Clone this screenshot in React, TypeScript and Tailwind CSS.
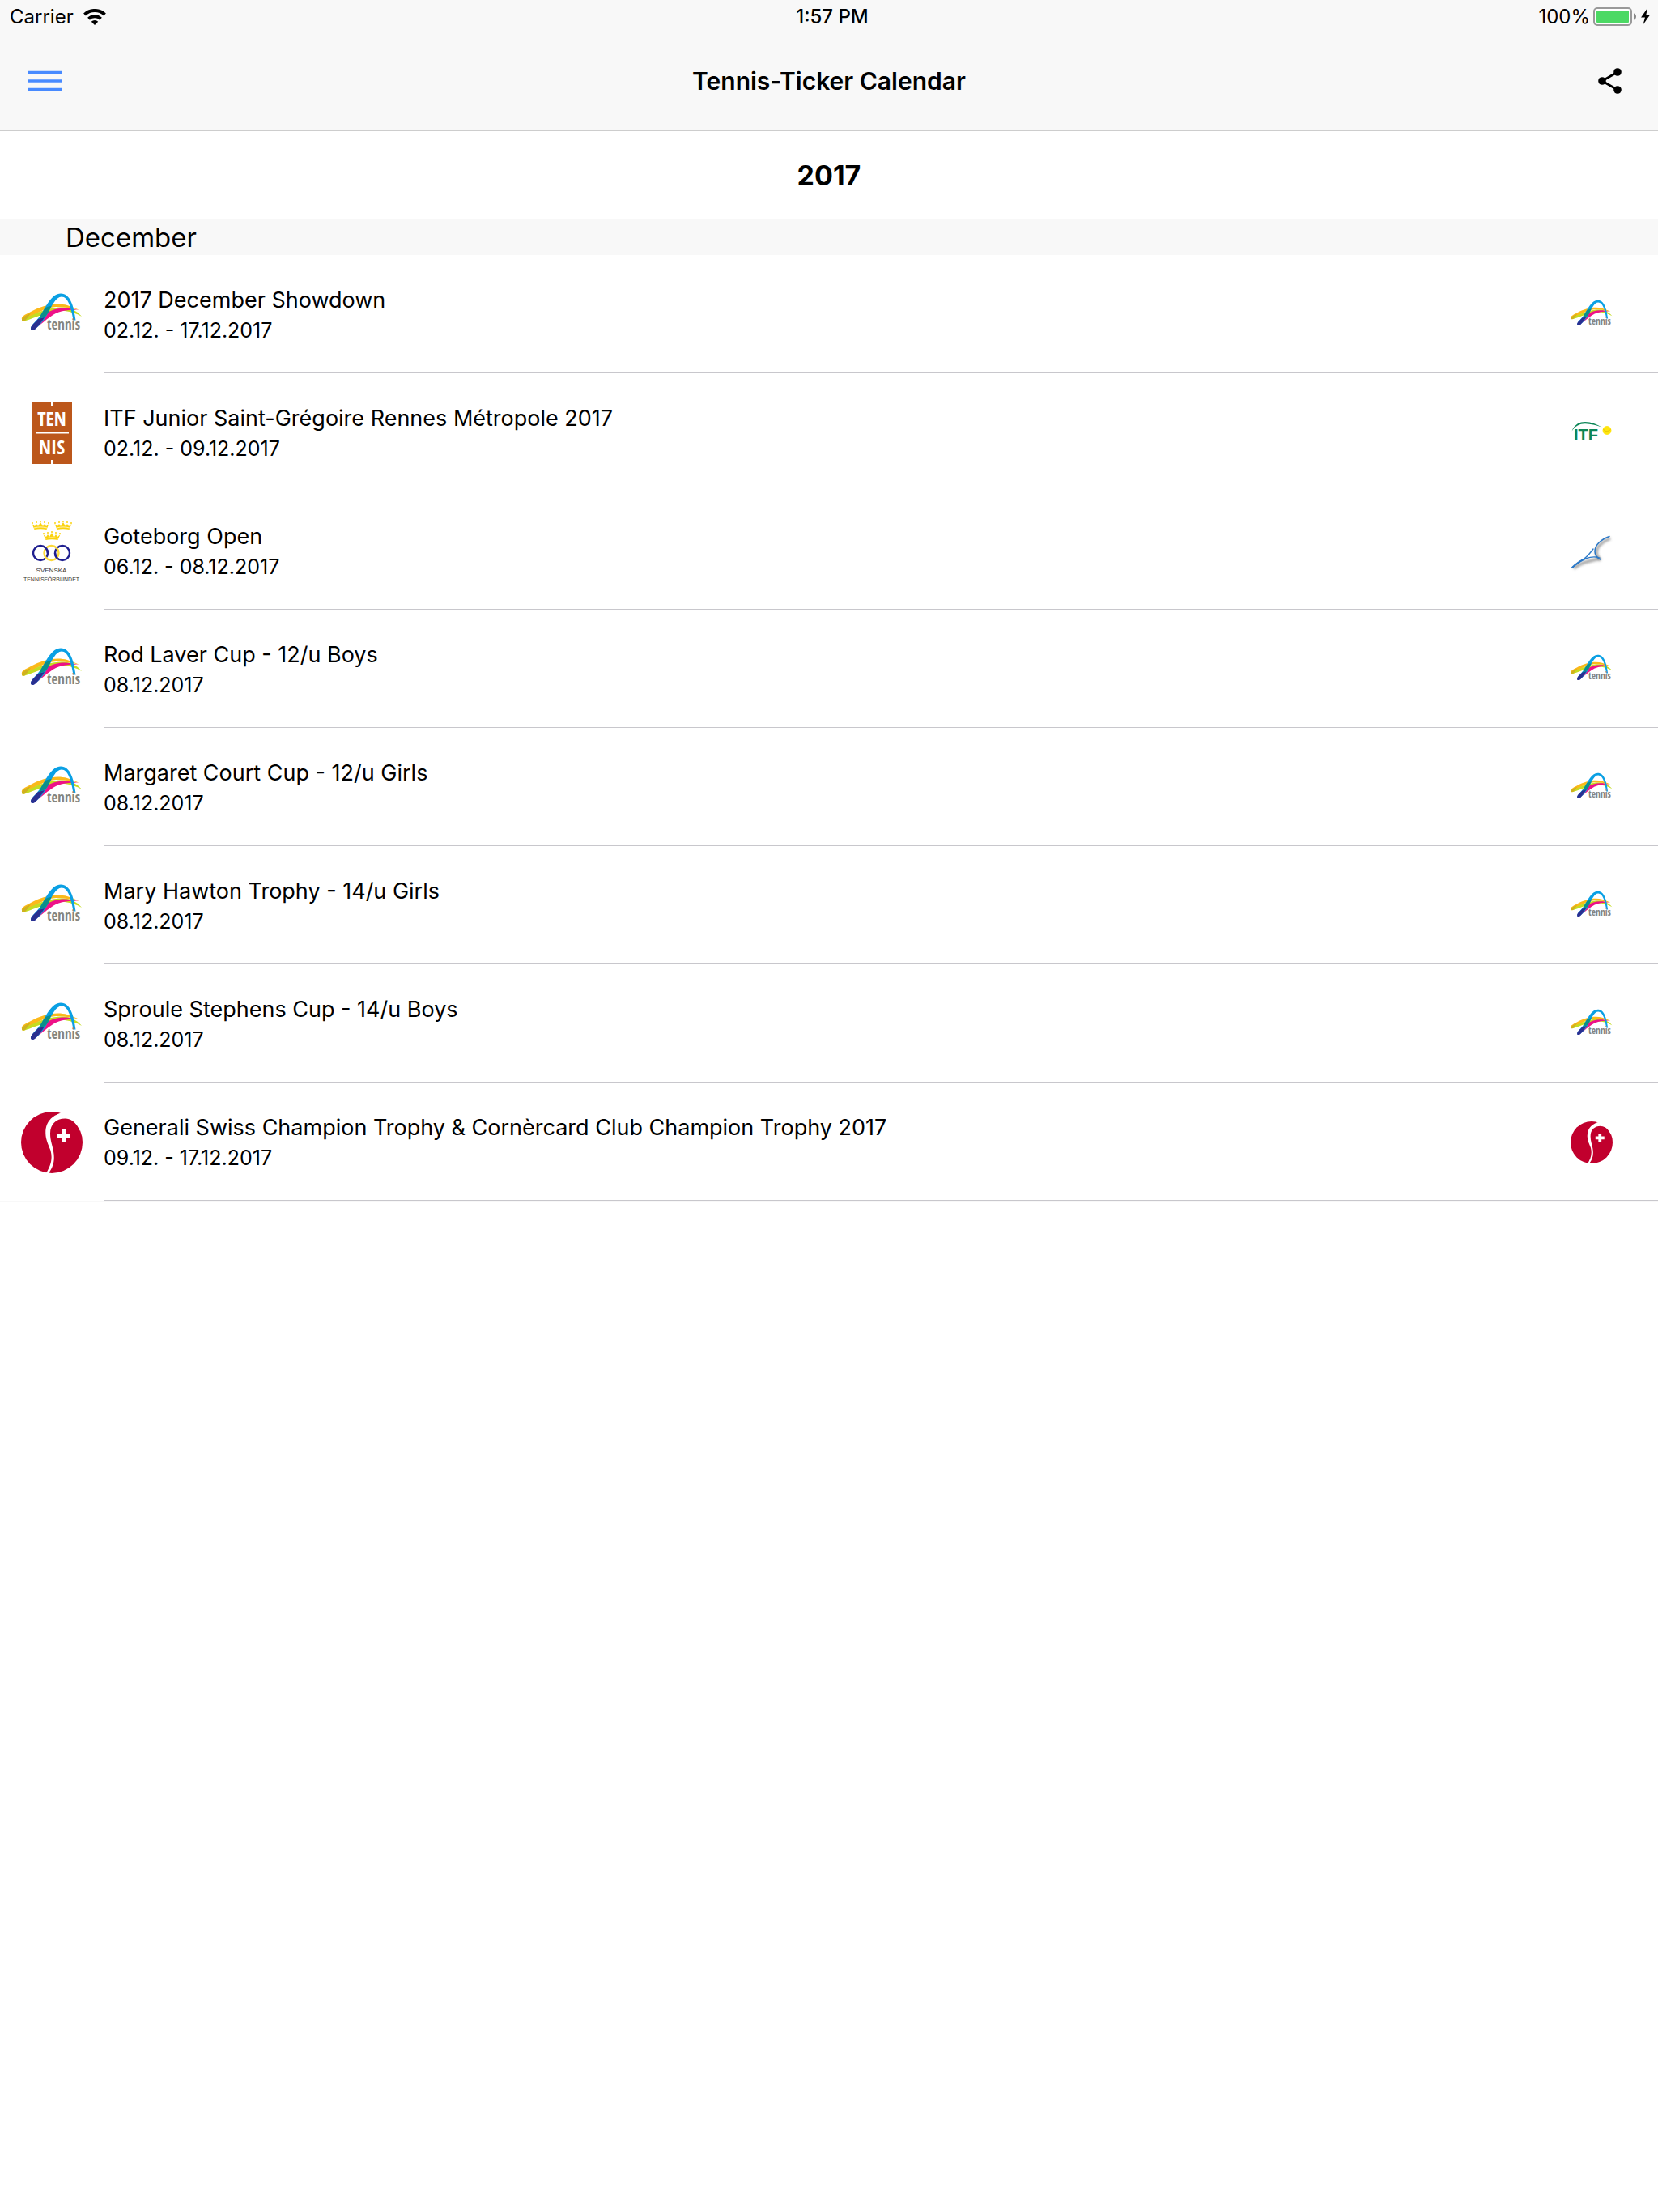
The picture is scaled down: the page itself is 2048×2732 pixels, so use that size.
import React from "react";

type LogoKind = "australia" | "france" | "sweden" | "itf" | "europe" | "swiss";

interface Tournament {
  title: string;
  dates: string;
  federation: LogoKind;
  organiser: LogoKind;
}

const tournaments: Tournament[] = [
  { title: "2017 December Showdown", dates: "02.12. - 17.12.2017", federation: "australia", organiser: "australia" },
  { title: "ITF Junior Saint-Grégoire Rennes Métropole 2017", dates: "02.12. - 09.12.2017", federation: "france", organiser: "itf" },
  { title: "Goteborg Open", dates: "06.12. - 08.12.2017", federation: "sweden", organiser: "europe" },
  { title: "Rod Laver Cup - 12/u Boys", dates: "08.12.2017", federation: "australia", organiser: "australia" },
  { title: "Margaret Court Cup - 12/u Girls", dates: "08.12.2017", federation: "australia", organiser: "australia" },
  { title: "Mary Hawton Trophy - 14/u Girls", dates: "08.12.2017", federation: "australia", organiser: "australia" },
  { title: "Sproule Stephens Cup - 14/u Boys", dates: "08.12.2017", federation: "australia", organiser: "australia" },
  {
    title: "Generali Swiss Champion Trophy & Cornèrcard Club Champion Trophy 2017",
    dates: "09.12. - 17.12.2017",
    federation: "swiss",
    organiser: "swiss",
  },
];

const condensed = "'Open Sans Condensed','Roboto Condensed','Liberation Sans Narrow','DejaVu Sans Condensed',sans-serif";

function AustraliaLogo() {
  return (
    <svg viewBox="0 0 76 76" className="size-full" aria-hidden="true">
      <path d="M1 43.500C0 40 4 38 12 34C26 26 44 22 57 26C63 28 68 30 72 32C62 29 52 28 43 28C28 29 14 39 5 45C3 46 1 46 1 43.500Z" fill="#fbb91a" />
      <path d="M1 44C1 42 6 41 14 38C28 31 44 27 57 29C65 31 71 35 75 40C68 36 62 34 54 33C38 32 18 41 6 45C3 46 1 46 1 44Z" fill="#c4dc22" />
      <path d="M1 44C1 41 5 39 12 36C9 40 7 43 5 45C3 46 1 46 1 44Z" fill="#cfb11f" />
      <path d="M12 55C12 50 22 43 30 37C42 28 56 28 71 32C58 31 46 33 38 39C29 45 24 50 18 55C15 58 12 57 12 55Z" fill="#ee1188" />
      <path d="M12 55C12 50 20 45 25 37C31 27 38 11.500 49 11.500C61 11.500 65 27 67.500 44.500L64.500 44.500C62 29 58 15.500 50 15.500C43 15.500 38 27 33 36C29 44 23 51 18 55C15 58 12 57 12 55Z" fill="#0aa0e4" />
      <path d="M12 55C12 51 17 48 21 43L29 41C25 47 22 51 18 55C15 58 12 57 12 55Z" fill="#2a2f90" />
      <path d="M25 37L29.500 29.500C32 28 35 27 37.500 27L33 36L30 40L22 43Z" fill="#0a8f8a" />
      <text x="32" y="56" fontSize="17" fontWeight="700" fontFamily={condensed} fill="#85857f">
        tennis
      </text>
    </svg>
  );
}

function FranceLogo() {
  return (
    <svg viewBox="0 0 76 76" className="size-full" aria-hidden="true">
      <rect x="14" width="49" height="76" fill="#bc571b" />
      <path d="M18 37.500H59" stroke="#fff" strokeWidth="2" />
      <path d="M38.500 0V5M38.500 71V76" stroke="#fff" strokeWidth="3" />
      <g fill="#fff" fontFamily={condensed} fontWeight="700" fontSize="24" textAnchor="middle">
        <text x="38" y="29">TEN</text>
        <text x="38" y="64">NIS</text>
      </g>
    </svg>
  );
}

function Crown({ x, y }: { x: number; y: number }) {
  return (
    <g transform={`translate(${x} ${y})`} fill="#fbd30f">
      <path d="M3.500 11L0.500 4L4 7L6 4L8 7L11 2L14 7L16 4L18 7L21.500 4L18.500 11C14 10 8 10 3.500 11Z" />
      <circle cx="1" cy="3" r="1" />
      <circle cx="6" cy="2" r="1" />
      <circle cx="11" cy="1" r="1" />
      <circle cx="16" cy="2" r="1" />
      <circle cx="21" cy="3" r="1" />
      <path d="M3 9C9 7.500 13 7.500 19 9" fill="none" stroke="#fff" strokeWidth="0.700" />
    </g>
  );
}

function SwedenLogo() {
  return (
    <svg viewBox="0 0 76 76" className="size-full" aria-hidden="true">
      <Crown x={13} y={0} />
      <Crown x={41} y={0} />
      <Crown x={27} y={13} />
      <g fill="none" strokeWidth="2.400">
        <circle cx="24" cy="40" r="9" stroke="#1f1f8f" />
        <circle cx="51" cy="40" r="9" stroke="#1f1f8f" />
        <circle cx="37.500" cy="40" r="9" stroke="#fbd93a" />
        <path d="M30 33.300A9 9 0 0 1 33 40" stroke="#1f1f8f" />
        <path d="M42 40A9 9 0 0 0 45 46.700" stroke="#1f1f8f" />
      </g>
      <g fill="#333" fontFamily="'Liberation Sans', sans-serif" textAnchor="middle">
        <text x="37.500" y="64" fontSize="8">SVENSKA</text>
        <text x="37.500" y="75" fontSize="7">TENNISFÖRBUNDET</text>
      </g>
    </svg>
  );
}

function ItfLogo() {
  return (
    <svg viewBox="0 0 52 52" className="size-full" aria-hidden="true">
      <path d="M1.500 23.500C5 15 11 12 18 12C26 12 32 15 38.500 18.500C31 16 25 14.500 18 14.300C11 14.300 6 17 1.500 23.500Z" fill="#0c8657" />
      <text x="4" y="35" fontSize="20" fontWeight="700" fontFamily="'Liberation Sans', sans-serif" fill="#0c8657">
        ITF
      </text>
      <circle cx="45" cy="22.500" r="5.400" fill="#ffe50f" />
      <path d="M40.500 21C42 24 46 24.500 49.500 21.500" fill="none" stroke="#e0c000" strokeWidth="0.800" />
    </svg>
  );
}

function EuropeLogo() {
  return (
    <svg viewBox="0 0 52 52" className="size-full" aria-hidden="true">
      <defs>
        <filter id="racket-shadow" x="-20%" y="-20%" width="140%" height="140%">
          <feGaussianBlur stdDeviation="1.500" />
        </filter>
      </defs>
      <g fill="none" stroke="#555" strokeOpacity="0.550" strokeWidth="3.500" filter="url(#racket-shadow)">
        <path d="M49 10C40 14 32 20 32 27C32 31 34 34 37 37" />
        <path d="M4 47C12 40 22 38 36 35" />
      </g>
      <g fill="none" stroke="#2a78c8" strokeLinecap="round">
        <path d="M48 7.500C38 11 30 18 30 26C30 31 32 33.500 37 36" strokeWidth="1.500" />
        <path d="M2 46C8 40 13 38 18 34C22 31 25 27 28 23" strokeWidth="1.300" />
        <path d="M9 40C18 34 26 31 36 34" strokeWidth="1.300" />
        <path d="M2 46C7 41 12 38 18 35" strokeWidth="2" />
      </g>
    </svg>
  );
}

function SwissLogo() {
  return (
    <svg viewBox="0 0 76 76" className="size-full" aria-hidden="true">
      <circle cx="38" cy="38" r="38" fill="#c1002d" />
      <path
        d="M51 1C41 4 30 10 30.300 27C30.500 35 34 41 36.500 48C39.500 59 36 68 31 76L34 76C40 68 42 60 40 49C39 42 36 36 36 27C36 15 44 8 55.500 8.600C63 9 69 15 73 24L78 12L62 -1Z"
        fill="#fff"
      />
      <path d="M53 22V37.500M45 29.700H61" stroke="#fff" strokeWidth="5.500" />
    </svg>
  );
}

const logos: Record<LogoKind, () => React.ReactElement> = {
  australia: AustraliaLogo,
  france: FranceLogo,
  sweden: SwedenLogo,
  itf: ItfLogo,
  europe: EuropeLogo,
  swiss: SwissLogo,
};

function StatusBar() {
  return (
    <div className="grid h-10 grid-cols-3 items-center pt-px pr-2 pl-3 text-2xl">
      <div className="flex items-center gap-3">
        <span>Carrier</span>
        <svg viewBox="0 0 28 20" className="h-5 w-7" aria-hidden="true">
          <path d="M1.500 7A18 18 0 0 1 26.500 7" fill="none" stroke="#000" strokeWidth="4" />
          <path d="M6.500 12.300A11 11 0 0 1 21.500 12.300" fill="none" stroke="#000" strokeWidth="4" />
          <path d="M14 20L9.800 15.800A6 6 0 0 1 18.200 15.800Z" />
        </svg>
      </div>
      <span className="pl-1 text-center font-medium">1:57 PM</span>
      <div className="flex items-center justify-end gap-1">
        <span>100%</span>
        <svg viewBox="0 0 72 24" className="h-6 w-[72px]" aria-hidden="true">
          <rect x="1" y="1" width="46" height="21" rx="4" fill="#fff" stroke="#999" strokeWidth="2" />
          <rect x="4" y="4" width="40" height="15" rx="1" fill="#4cd964" />
          <path d="M50 7.500C54 8.500 54 14.500 50 15.500Z" fill="#888" />
          <path d="M67 1L59 12.500H64L61.500 21.500L70 9.500H65.300Z" />
        </svg>
      </div>
    </div>
  );
}

function Toolbar() {
  return (
    <div className="grid h-30 grid-cols-[96px_1fr_96px] items-center">
      <button type="button" aria-label="Open menu" className="flex h-full items-center pl-[35px]">
        <svg viewBox="0 0 42 28" className="h-7 w-[42px]" aria-hidden="true">
          <path d="M0 3.500H42M0 14H42M0 24.500H42" stroke="#488aff" strokeWidth="3.600" />
        </svg>
      </button>
      <h1 className="text-center text-[30px] font-semibold">Tennis-Ticker Calendar</h1>
      <button type="button" aria-label="Share" className="flex h-full items-center pl-[22px]">
        <svg viewBox="0 0 30 32" className="h-8 w-[30px]" aria-hidden="true">
          <path d="M24 5L5 16L24 27" fill="none" stroke="#000" strokeWidth="2.800" />
          <circle cx="24" cy="5" r="4.800" />
          <circle cx="5" cy="16" r="4.800" />
          <circle cx="24" cy="27" r="4.800" />
        </svg>
      </button>
    </div>
  );
}

function TournamentRow({ title, dates, federation, organiser }: Tournament) {
  const Federation = logos[federation];
  const Organiser = logos[organiser];
  return (
    <li className="flex h-[146px] items-stretch pl-[26px]">
      <div className="flex shrink-0 items-center pt-0.5 pr-[26px]">
        <div className="size-[76px]">
          <Federation />
        </div>
      </div>
      <div className="flex min-w-0 flex-1 items-center justify-between border-b border-[#c8c7cc] pr-14">
        <div>
          <h2 className="text-[27px] leading-10">{title}</h2>
          <p className="text-[25px] leading-[34px]">{dates}</p>
        </div>
        <div className="mt-0.5 size-[52px] shrink-0">
          <Organiser />
        </div>
      </div>
    </li>
  );
}

export default function App() {
  return (
    <div className="min-h-screen bg-white font-['Inter','Noto_Sans',sans-serif] text-black">
      <header className="border-b-2 border-[#cdcdcd] bg-[#f8f8f8]">
        <StatusBar />
        <Toolbar />
      </header>
      <main>
        <h2 className="py-8 text-center text-[34px] leading-[45px] font-bold">2017</h2>
        <section>
          <h3 className="bg-[#f8f8f8] pl-[81px] text-[33px] leading-[44px]">December</h3>
          <ul className="border-b-2 border-[#f8f8f8]">
            {tournaments.map((t) => (
              <TournamentRow key={t.title} {...t} />
            ))}
          </ul>
        </section>
      </main>
    </div>
  );
}
